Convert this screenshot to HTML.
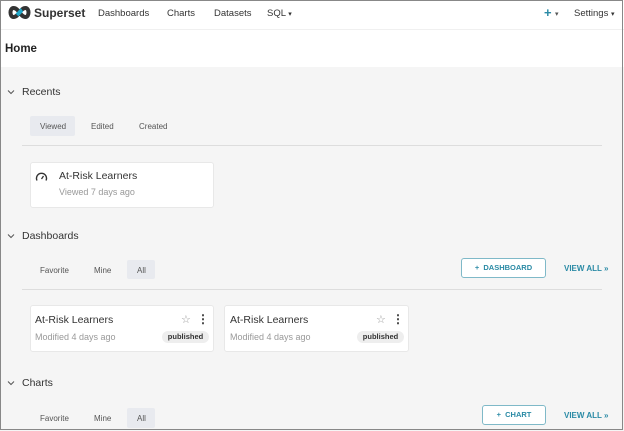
<!DOCTYPE html>
<html><head><style>
*{margin:0;padding:0;box-sizing:border-box}
body{width:624px;height:431px;overflow:hidden;font-family:"Liberation Sans",sans-serif;background:#f5f5f5;position:relative;color:#333}
.a{position:absolute;white-space:nowrap}
.frame{position:absolute;left:0;top:0;width:623px;height:430px;border:1px solid #888;z-index:10;pointer-events:none}
.nav{position:absolute;left:0;top:0;width:624px;height:30px;background:#fff;border-bottom:1px solid #f0f0f0}
.hdr{position:absolute;left:0;top:30px;width:624px;height:37px;background:#fff}
.navt{font-size:9.5px;color:#333;top:8px}
.sec{font-size:10.5px;color:#333}
.tab{font-size:8px;color:#555}
.tabbg{position:absolute;background:#e8eaef;border-radius:2px}
.line{position:absolute;height:1px;background:#ddd}
.card{position:absolute;background:#fff;border:1px solid #e8e8e8;border-radius:3px}
.title{font-size:10.5px;color:#333}
.sub{font-size:9px;color:#999}
.pub{position:absolute;background:#eee;border-radius:8px;font-size:7.5px;color:#333;font-weight:bold;text-align:center;line-height:12px}
.btn{position:absolute;border:1px solid #7fb9c8;border-radius:3px;background:#fff;font-size:7.5px;font-weight:bold;text-align:center;line-height:18px;color:#2a8aa5}
.va{font-size:8px;font-weight:bold;color:#2a8aa5}
</style></head><body>
<div class="nav"></div>
<svg class="a" style="left:7px;top:5px" width="25" height="15" viewBox="0 0 25 15">
<path d="M6.5 3 C2.5 3 2.5 12 6.5 12 C9.5 12 11 9.5 12.5 7.5 C14 5.5 15.5 3 18.5 3 C22.5 3 22.5 12 18.5 12 C15.5 12 14 9.5 12.5 7.5 C11 5.5 9.5 3 6.5 3 Z" fill="none" stroke="#333" stroke-width="4"/>
<path d="M10 10 C11 9 11.8 8.4 12.5 7.5 C13.2 6.6 14 5.5 15 4.8" fill="none" stroke="#20a7c9" stroke-width="4"/>
</svg>
<div class="a" style="left:34px;top:6px;font-size:12px;font-weight:bold;color:#333">Superset</div>
<div class="a navt" style="left:98px">Dashboards</div>
<div class="a navt" style="left:167px">Charts</div>
<div class="a navt" style="left:214px">Datasets</div>
<div class="a navt" style="left:267px">SQL <span style="font-size:7px">▾</span></div>
<div class="a navt" style="left:544px;color:#2a8aa5;font-size:13px;top:5px;font-weight:bold">+</div>
<div class="a" style="left:555px;top:10px;font-size:7px;color:#555">▾</div>
<div class="a navt" style="left:574px">Settings <span style="font-size:7px">▾</span></div>
<div class="hdr"></div>
<div class="a" style="left:5px;top:43px;font-size:11.5px;font-weight:bold;color:#222">Home</div>

<svg class="a" style="left:7px;top:89px" width="8" height="6" viewBox="0 0 8 6"><path d="M1 1.5 L4 4.5 L7 1.5" fill="none" stroke="#555" stroke-width="1"/></svg>
<div class="a sec" style="left:22px;top:86px">Recents</div>
<div class="tabbg" style="left:30px;top:116px;width:45px;height:20px"></div>
<div class="a tab" style="left:40px;top:122px">Viewed</div>
<div class="a tab" style="left:91px;top:122px">Edited</div>
<div class="a tab" style="left:139px;top:122px">Created</div>
<div class="line" style="left:22px;top:145px;width:580px"></div>
<div class="card" style="left:30px;top:162px;width:184px;height:46px"></div>
<svg class="a" style="left:35px;top:171px" width="13" height="11" viewBox="0 0 13 11"><path d="M2 9.5 A5 5 0 1 1 11 9.5" fill="none" stroke="#333" stroke-width="1.4"/><path d="M6.5 8 L8.5 5" stroke="#333" stroke-width="1.3"/></svg>
<div class="a title" style="left:59px;top:170px">At-Risk Learners</div>
<div class="a sub" style="left:59px;top:187px">Viewed 7 days ago</div>

<svg class="a" style="left:7px;top:233px" width="8" height="6" viewBox="0 0 8 6"><path d="M1 1.5 L4 4.5 L7 1.5" fill="none" stroke="#555" stroke-width="1"/></svg>
<div class="a sec" style="left:22px;top:230px">Dashboards</div>
<div class="a tab" style="left:40px;top:266px">Favorite</div>
<div class="a tab" style="left:94px;top:266px">Mine</div>
<div class="tabbg" style="left:127px;top:260px;width:28px;height:19px"></div>
<div class="a tab" style="left:137px;top:266px">All</div>
<div class="btn" style="left:461px;top:258px;width:85px;height:20px">+&nbsp; DASHBOARD</div>
<div class="a va" style="left:564px;top:264px">VIEW ALL »</div>
<div class="line" style="left:22px;top:289px;width:580px"></div>
<div class="card" style="left:30px;top:305px;width:184px;height:47px"></div>
<div class="a title" style="left:35px;top:314px">At-Risk Learners</div>
<div class="a sub" style="left:35px;top:332px">Modified 4 days ago</div>
<div class="a" style="left:181px;top:313px;font-size:11px;color:#999">☆</div>
<div class="a" style="left:197px;top:312px;font-size:12px;font-weight:bold;color:#333">⋮</div>
<div class="pub" style="left:162px;top:331px;width:47px">published</div>
<div class="card" style="left:224px;top:305px;width:185px;height:47px"></div>
<div class="a title" style="left:230px;top:314px">At-Risk Learners</div>
<div class="a sub" style="left:230px;top:332px">Modified 4 days ago</div>
<div class="a" style="left:376px;top:313px;font-size:11px;color:#999">☆</div>
<div class="a" style="left:392px;top:312px;font-size:12px;font-weight:bold;color:#333">⋮</div>
<div class="pub" style="left:357px;top:331px;width:47px">published</div>

<svg class="a" style="left:7px;top:380px" width="8" height="6" viewBox="0 0 8 6"><path d="M1 1.5 L4 4.5 L7 1.5" fill="none" stroke="#555" stroke-width="1"/></svg>
<div class="a sec" style="left:22px;top:377px">Charts</div>
<div class="a tab" style="left:40px;top:414px">Favorite</div>
<div class="a tab" style="left:94px;top:414px">Mine</div>
<div class="tabbg" style="left:127px;top:408px;width:28px;height:20px"></div>
<div class="a tab" style="left:137px;top:414px">All</div>
<div class="btn" style="left:482px;top:405px;width:64px;height:20px">+&nbsp; CHART</div>
<div class="a va" style="left:564px;top:411px">VIEW ALL »</div>
<div class="frame"></div>
</body></html>
